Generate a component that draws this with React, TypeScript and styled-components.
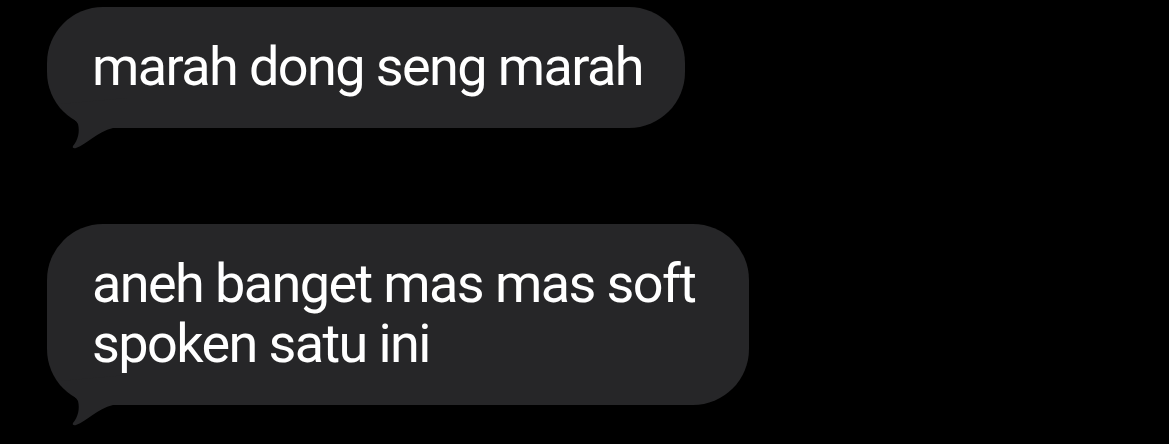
import React from "react";
import styled, { createGlobalStyle } from "styled-components";

const Global = createGlobalStyle`
  html, body { margin: 0; padding: 0; background: #000; }
  body { width: 1169px; height: 444px; overflow: hidden; }
`;

const Thread = styled.div`
  display: flex;
  flex-direction: column;
  align-items: flex-start;
  gap: 96px;
  padding: 7px 0 0 47px;
  background: #000;
  height: 444px;
  box-sizing: border-box;
`;

const Bubble = styled.div<{ $max?: number }>`
  position: relative;
  box-sizing: border-box;
  width: fit-content;
  max-width: ${(p) => (p.$max ? `${p.$max}px` : "none")};
  padding: 30px 42px 31px 45px;
  background: #262628;
  border-radius: 56px;
  color: #fff;
  font-family: Roboto, "Liberation Sans", sans-serif;
  font-size: 54px;
  line-height: 60px;
  letter-spacing: -1.6px;
`;

const Tail = styled.svg`
  position: absolute;
  left: 0;
  bottom: -21px;
  width: 80px;
  height: 61px;
  overflow: visible;
`;

const BubbleTail = () => (
  <Tail viewBox="0 0 80 61">
    <path
      d="M12 16 C 18 26, 28 30, 31 36 C 33 44, 31 52, 26 58 C 25 60, 27 60.5, 29 60 C 40 56, 50 44, 66 40 L 80 40 L 80 10 Z"
      fill="#262628"
    />
  </Tail>
);

export default function App() {
  return (
    <>
      <Global />
      <Thread>
        <Bubble>
          marah dong seng marah
          <BubbleTail />
        </Bubble>
        <Bubble $max={702}>
          aneh banget mas mas soft spoken satu ini
          <BubbleTail />
        </Bubble>
      </Thread>
    </>
  );
}
